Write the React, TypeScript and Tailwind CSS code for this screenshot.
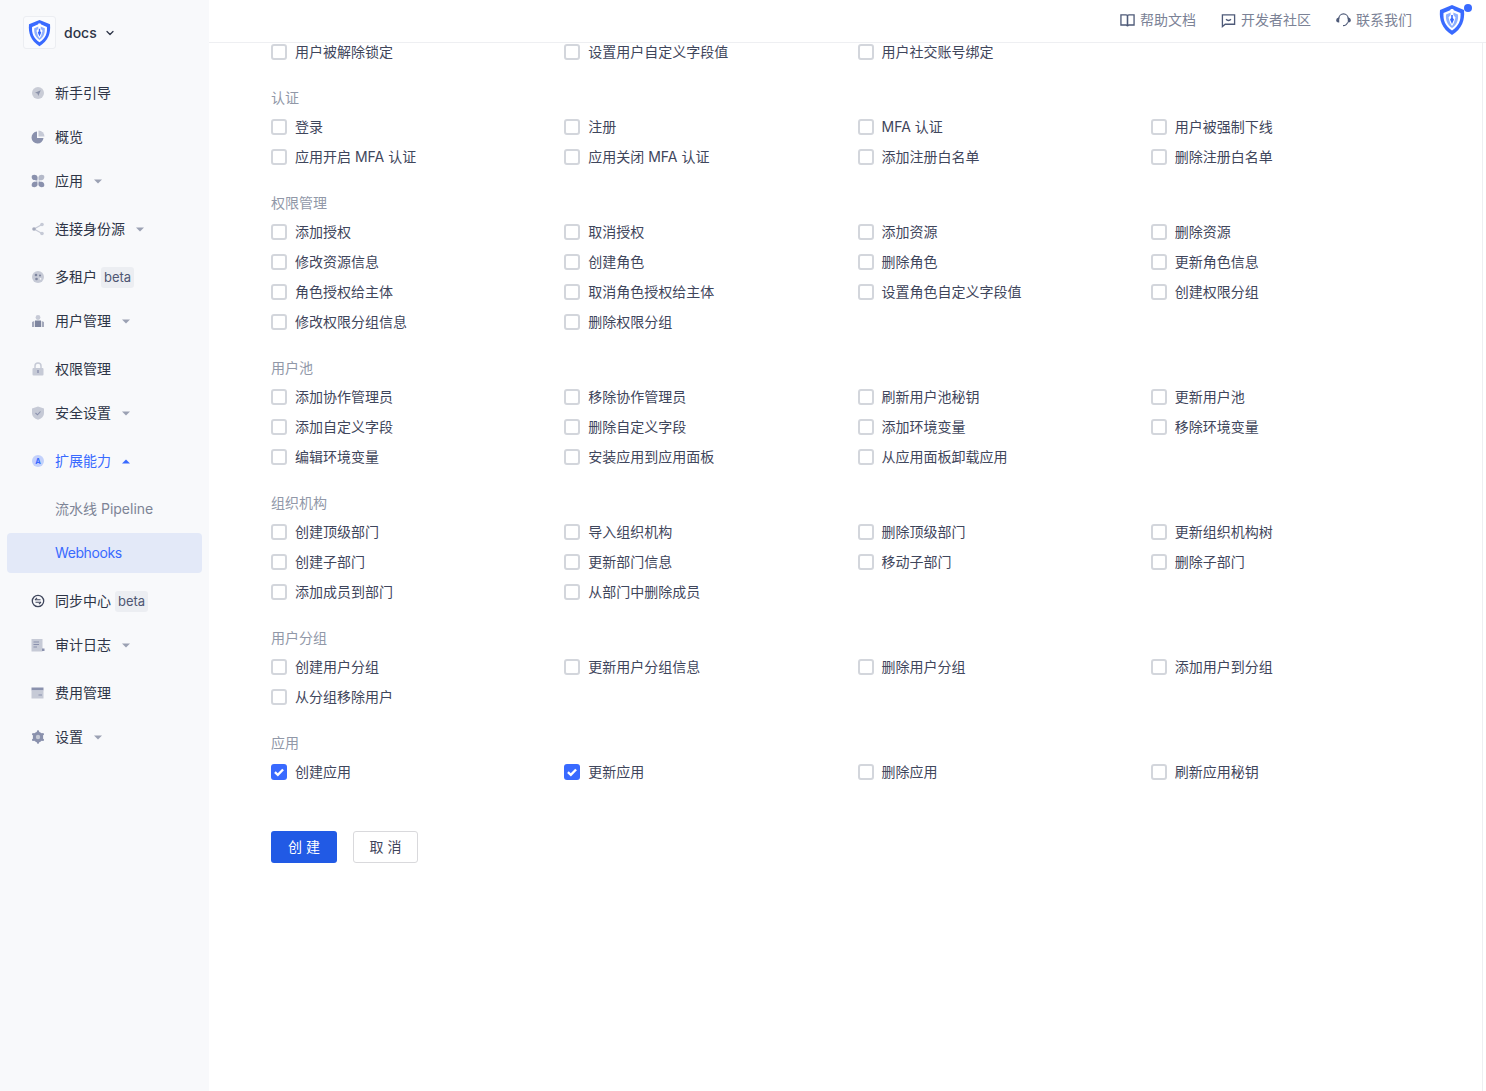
import React from 'react';
import { ChevronDown } from 'lucide-react';

const Shield = ({ className }: { className: string }) => (
  <svg viewBox="0 0 28 32" className={className}>
    <path d="M14 1 L26 6 C27 16 24 25 14 31 C4 25 1 16 2 6 Z" fill="#396aff" />
    <path d="M14 5.500 L22.500 9 C23 16 21 22 14 26.500 C7 22 5 16 5.500 9 Z" fill="#fff" />
    <path d="M14 8 L20 10.500 C20.500 16 19 20.500 14 24 C9 20.500 7.500 16 8 10.500 Z" fill="#8fb0ff" />
    <path d="M12.600 5 H15.400 V11 L17.500 13.500 L15.800 19 L14 22 L12.200 19 L10.500 13.500 L12.600 11 Z" fill="#fff" />
    <path d="M13.200 11 H14.800 V14 L16 15.500 L14 20 L12 15.500 L13.200 14 Z" fill="#396aff" />
  </svg>
);

const icons: Record<string, React.ReactNode> = {
  guide: (
    <>
      <circle cx="7" cy="7" r="6" fill="#c9ccd6" />
      <path d="M9.800 4.200 L4 6.800 L6.500 7.500 L7.200 10 Z" fill="#8a91a8" />
    </>
  ),
  overview: (
    <>
      <path d="M6 1.500 A6 6 0 1 0 12.500 8 H6 Z" fill="#8a91ad" />
      <path d="M7.500 .5 A6 6 0 0 1 13.500 6.500 H7.500 Z" fill="#c6cad6" />
    </>
  ),
  apps: (
    <>
      <path d="M1 1.500 C3 .2 6 .8 6.500 3 C6.800 4.500 6.200 5.800 6.500 6.500 C5 6.300 3.500 6.500 2.500 6 C.7 5.200 .3 3 1 1.500 Z" fill="#8a91ad" />
      <path d="M13 1.500 C11 .2 8 .8 7.500 3 C7.200 4.500 7.800 5.800 7.500 6.500 C9 6.300 10.500 6.500 11.500 6 C13.300 5.200 13.700 3 13 1.500 Z" fill="#b4b9c9" />
      <path d="M1 12.500 C3 13.800 6 13.200 6.500 11 C6.800 9.500 6.200 8.200 6.500 7.500 C5 7.700 3.500 7.500 2.500 8 C.7 8.800 .3 11 1 12.500 Z" fill="#8a91ad" />
      <path d="M13 12.500 C11 13.800 8 13.200 7.500 11 C7.200 9.500 7.800 8.200 7.500 7.500 C9 7.700 10.500 7.500 11.500 8 C13.300 8.800 13.700 11 13 12.500 Z" fill="#8a91ad" />
    </>
  ),
  share: (
    <>
      <path d="M11 2.500 L3 7 L11 11.500" stroke="#c6cad6" strokeWidth="1.200" fill="none" />
      <circle cx="11" cy="2.500" r="1.800" fill="#c6cad6" />
      <circle cx="3" cy="7" r="1.800" fill="#a4a9bb" />
      <circle cx="11" cy="11.500" r="1.800" fill="#c6cad6" />
    </>
  ),
  tenant: (
    <>
      <circle cx="7" cy="7" r="6" fill="#c6cad6" />
      <circle cx="5" cy="5" r="1.300" fill="#7f869f" />
      <circle cx="9" cy="5.500" r="1.100" fill="#7f869f" />
      <circle cx="5.500" cy="9" r="1.300" fill="#7f869f" />
      <circle cx="9.500" cy="8.800" r=".9" fill="#f8f9fb" />
    </>
  ),
  users: (
    <>
      <circle cx="7" cy="3.500" r="2.400" fill="#c6cad6" />
      <path d="M4 6.500 H10 V13 H4 Z" fill="#7f869f" />
      <path d="M1 8 L3.300 7 V13 H1 Z M13 8 L10.700 7 V13 H13 Z" fill="#a4a9bb" />
    </>
  ),
  lock: (
    <>
      <path d="M4 6 V4 A3 3 0 0 1 10 4 V6" stroke="#c6cad6" strokeWidth="1.500" fill="none" />
      <rect x="1.500" y="6" width="11" height="7.500" rx="1" fill="#c6cad6" />
      <rect x="6.300" y="8" width="1.400" height="3" fill="#8a91ad" />
    </>
  ),
  safe: (
    <>
      <path d="M7 .5 L13 2.500 V7 C13 10.500 10.500 12.500 7 13.800 C3.500 12.500 1 10.500 1 7 V2.500 Z" fill="#c6cad6" />
      <path d="M4.500 7 L6.500 8.800 L9.500 5.500" stroke="#8a91ad" strokeWidth="1.100" fill="none" />
    </>
  ),
  extend: (
    <>
      <circle cx="7" cy="7" r="6" fill="#c3d1fb" />
      <text x="7" y="9.600" textAnchor="middle" fontSize="7.500" fontWeight="700" fill="#396aff">A</text>
    </>
  ),
  sync: (
    <>
      <circle cx="7" cy="7" r="5.700" stroke="#3f465c" strokeWidth="1.300" fill="none" />
      <path d="M4 5.800 H9.500 M10 8.200 H4.500" stroke="#3f465c" strokeWidth="1.100" />
      <path d="M6 3.800 L4 5.800 M8 10.200 L10 8.200" stroke="#3f465c" strokeWidth="1.100" />
    </>
  ),
  audit: (
    <>
      <rect x=".5" y="1" width="11" height="12.500" fill="#c6cad6" />
      <path d="M2.500 4 H8 M2.500 6.500 H8 M2.500 9 H6" stroke="#8a91ad" strokeWidth="1" />
      <rect x="11" y="10.500" width="2.500" height="2.500" fill="#8a91ad" />
    </>
  ),
  billing: (
    <>
      <rect x=".5" y="1.500" width="12" height="3" fill="#8a91ad" />
      <rect x=".5" y="4.500" width="12" height="8" fill="#c6cad6" />
      <rect x="7.500" y="8.500" width="3.500" height="1" fill="#8a91ad" />
    </>
  ),
  settings: (
    <>
      <circle cx="7" cy="7" r="5.200" fill="#8a91ad" />
      <path d="M7 1.500 V12.500 M2.200 4.200 L11.800 9.800 M2.200 9.800 L11.800 4.200" stroke="#8a91ad" strokeWidth="2.400" strokeLinecap="round" />
      <circle cx="7" cy="7" r="2.200" fill="#c6cad6" />
    </>
  ),
};

interface NavItem {
  label: string;
  icon: string;
  arrow?: boolean;
  beta?: boolean;
  gap: string;
}

const navItems: NavItem[] = [
  { label: '新手引导', icon: 'guide', gap: 'mt-0' },
  { label: '概览', icon: 'overview', gap: 'mt-1' },
  { label: '应用', icon: 'apps', arrow: true, gap: 'mt-1' },
  { label: '连接身份源', icon: 'share', arrow: true, gap: 'mt-2' },
  { label: '多租户', icon: 'tenant', beta: true, gap: 'mt-2' },
  { label: '用户管理', icon: 'users', arrow: true, gap: 'mt-1' },
  { label: '权限管理', icon: 'lock', gap: 'mt-2' },
  { label: '安全设置', icon: 'safe', arrow: true, gap: 'mt-1' },
];

const navItemsBottom: NavItem[] = [
  { label: '同步中心', icon: 'sync', beta: true, gap: 'mt-2' },
  { label: '审计日志', icon: 'audit', arrow: true, gap: 'mt-1' },
  { label: '费用管理', icon: 'billing', gap: 'mt-2' },
  { label: '设置', icon: 'settings', arrow: true, gap: 'mt-1' },
];

const sections: { title?: string; items: string[]; checked?: string[] }[] = [
  { items: ['用户被解除锁定', '设置用户自定义字段值', '用户社交账号绑定'] },
  {
    title: '认证',
    items: ['登录', '注册', 'MFA 认证', '用户被强制下线', '应用开启 MFA 认证', '应用关闭 MFA 认证', '添加注册白名单', '删除注册白名单'],
  },
  {
    title: '权限管理',
    items: [
      '添加授权', '取消授权', '添加资源', '删除资源',
      '修改资源信息', '创建角色', '删除角色', '更新角色信息',
      '角色授权给主体', '取消角色授权给主体', '设置角色自定义字段值', '创建权限分组',
      '修改权限分组信息', '删除权限分组',
    ],
  },
  {
    title: '用户池',
    items: [
      '添加协作管理员', '移除协作管理员', '刷新用户池秘钥', '更新用户池',
      '添加自定义字段', '删除自定义字段', '添加环境变量', '移除环境变量',
      '编辑环境变量', '安装应用到应用面板', '从应用面板卸载应用',
    ],
  },
  {
    title: '组织机构',
    items: [
      '创建顶级部门', '导入组织机构', '删除顶级部门', '更新组织机构树',
      '创建子部门', '更新部门信息', '移动子部门', '删除子部门',
      '添加成员到部门', '从部门中删除成员',
    ],
  },
  {
    title: '用户分组',
    items: ['创建用户分组', '更新用户分组信息', '删除用户分组', '添加用户到分组', '从分组移除用户'],
  },
  {
    title: '应用',
    items: ['创建应用', '更新应用', '删除应用', '刷新应用秘钥'],
    checked: ['创建应用', '更新应用'],
  },
];

const Caret = ({ up, blue }: { up?: boolean; blue?: boolean }) => (
  <svg viewBox="0 0 8 5" className="ml-[11px] h-[5px] w-[8px]">
    <path d={up ? 'M0 4.500 L4 .5 L8 4.500 Z' : 'M0 .5 L8 .5 L4 4.500 Z'} fill={blue ? '#396aff' : '#9ba1b3'} />
  </svg>
);

const Nav = ({ item }: { item: NavItem }) => (
  <div className={`${item.gap} flex h-10 items-center pl-[24px] text-[14px] text-[#2e3547]`}>
    <svg viewBox="0 0 14 14" className="mr-[10px] h-[14px] w-[14px] shrink-0">
      {icons[item.icon]}
    </svg>
    <span className="pb-[2px]">{item.label}</span>
    {item.arrow && <Caret />}
    {item.beta && (
      <span className="ml-[4px] flex h-[21px] w-[33px] items-center justify-center rounded-[3px] bg-[#eceef2] pt-[2px] text-[13px] text-[#4e5672]">
        beta
      </span>
    )}
  </div>
);

const Check = ({ label, checked }: { label: string; checked: boolean }) => (
  <label className="flex h-[30px] items-center gap-2 text-[14px] text-[#3f465c]">
    {checked ? (
      <span className="flex h-4 w-4 items-center justify-center rounded-[3px] bg-[#396aff]">
        <svg viewBox="0 0 12 12" className="h-[14px] w-[14px]">
          <path d="M2.500 6.200 L5 8.500 L9.500 3.800" stroke="#fff" strokeWidth="2" fill="none" />
        </svg>
      </span>
    ) : (
      <span className="h-4 w-4 rounded-[3px] border-2 border-[#d3d6dc] bg-white" />
    )}
    <span className="pb-[2px]">{label}</span>
  </label>
);

export default function App() {
  return (
    <div className="flex h-screen w-full overflow-hidden bg-white font-['Inter','Noto_Sans_CJK_SC',sans-serif]">
      <aside className="w-[209px] shrink-0 bg-[#f8f9fb]">
        <div className="flex h-[73px] items-center pb-2 pl-[23px]">
          <div className="flex h-[33px] w-[33px] items-center justify-center rounded-[3px] border border-[#eceef2] bg-[#fafbfd]">
            <Shield className="h-[28px] w-[25px]" />
          </div>
          <span className="ml-2 text-[14px] font-medium text-[#2e3547]">docs</span>
          <ChevronDown size={12} strokeWidth={2.500} className="ml-[7px] text-[#2e3547]" />
        </div>
        <nav className="px-[7px]">
          {navItems.map(item => (
            <Nav key={item.label} item={item} />
          ))}
          <div className="mt-2 flex h-10 items-center pl-[24px] text-[14px] text-[#396aff]">
            <svg viewBox="0 0 14 14" className="mr-[10px] h-[14px] w-[14px]">
              {icons.extend}
            </svg>
            <span className="pb-[2px]">扩展能力</span>
            <Caret up blue />
          </div>
          <div className="mt-2 flex h-10 items-center pb-[2px] pl-[48px] text-[14px] text-[#7d8496]">流水线 Pipeline</div>
          <div className="mt-1 flex h-10 items-center rounded-[4px] bg-[#e3e9f8] pb-[2px] pl-[48px] text-[14px] tracking-[-0.4px] text-[#396aff]">
            Webhooks
          </div>
          {navItemsBottom.map(item => (
            <Nav key={item.label} item={item} />
          ))}
        </nav>
      </aside>

      <main className="flex min-w-0 flex-1 flex-col">
        <header className="relative z-10 flex h-[43px] shrink-0 items-center justify-end border-b border-[#eeeff2] bg-white pb-[2px] text-[14px] text-[#7b8296]">
          <div className="flex items-center">
            <svg viewBox="0 0 16 16" className="mr-[5px] h-[15px] w-[15px]" fill="none" stroke="#4e5a78" strokeWidth="1.400">
              <path d="M1 2 H6.500 C7.400 2 8 2.600 8 3.500 V14 C8 13.200 7.400 12.800 6.500 12.800 H1 Z" />
              <path d="M15 2 H9.500 C8.600 2 8 2.600 8 3.500 V14 C8 13.200 8.600 12.800 9.500 12.800 H15 Z" />
            </svg>
            <span className="pb-[2px]">帮助文档</span>
          </div>
          <div className="ml-[25px] flex items-center">
            <svg viewBox="0 0 16 16" className="mr-[5px] h-[15px] w-[15px]" fill="none" stroke="#4e5a78" strokeWidth="1.400">
              <path d="M1.500 2 H14.500 V12 H4.500 L1.500 14.500 Z" />
              <path d="M5.500 6.500 C6.500 8.500 9.500 8.500 10.500 6.500" />
            </svg>
            <span className="pb-[2px]">开发者社区</span>
          </div>
          <div className="ml-[25px] flex items-center">
            <svg viewBox="0 0 16 16" className="mr-[5px] h-[15px] w-[15px]" fill="none" stroke="#4e5a78" strokeWidth="1.300">
              <path d="M3 6 A5 5 0 0 1 13 6" />
              <path d="M2.800 5.500 C1.500 5.800 .8 6.500 .8 7.600 C.8 8.700 1.500 9.400 2.800 9.500 Z" fill="#4e5a78" />
              <path d="M13.200 5.500 C14.500 5.800 15.200 6.500 15.200 7.600 C15.200 8.700 14.500 9.400 13.200 9.500 Z" fill="#4e5a78" />
              <path d="M12.500 10 C11.500 12.500 10 13.500 7.500 13.500" />
            </svg>
            <span className="pb-[2px]">联系我们</span>
          </div>
          <div className="relative mr-[20px] ml-[26px]">
            <Shield className="h-[32px] w-[28px]" />
            <span className="absolute top-0 right-[-6px] h-2 w-2 rounded-full bg-[#396aff]" />
          </div>
        </header>
        <div className="mr-[3px] flex-1 overflow-hidden border-r border-[#eeeff2] pl-[62px]">
          <div className="-mt-[6px] w-[1173px]">
            {sections.map((section, i) => (
              <section key={i} className="mb-5">
                {section.title && (
                  <div className="mb-[3px] h-[22px] text-[14px] leading-[22px] text-[#9198a8]">{section.title}</div>
                )}
                <div className="grid grid-cols-4">
                  {section.items.map(label => (
                    <Check key={label} label={label} checked={!!section.checked?.includes(label)} />
                  ))}
                </div>
              </section>
            ))}
            <div className="mt-[44px] flex gap-4">
              <button className="h-8 w-[66px] rounded-[3px] bg-[#215ae5] pb-[2px] text-[14px] text-white">创 建</button>
              <button className="h-8 w-[65px] rounded-[3px] border border-[#d9d9dc] bg-white pb-[2px] text-[14px] text-[#3f465c]">
                取 消
              </button>
            </div>
          </div>
        </div>
      </main>
    </div>
  );
}
